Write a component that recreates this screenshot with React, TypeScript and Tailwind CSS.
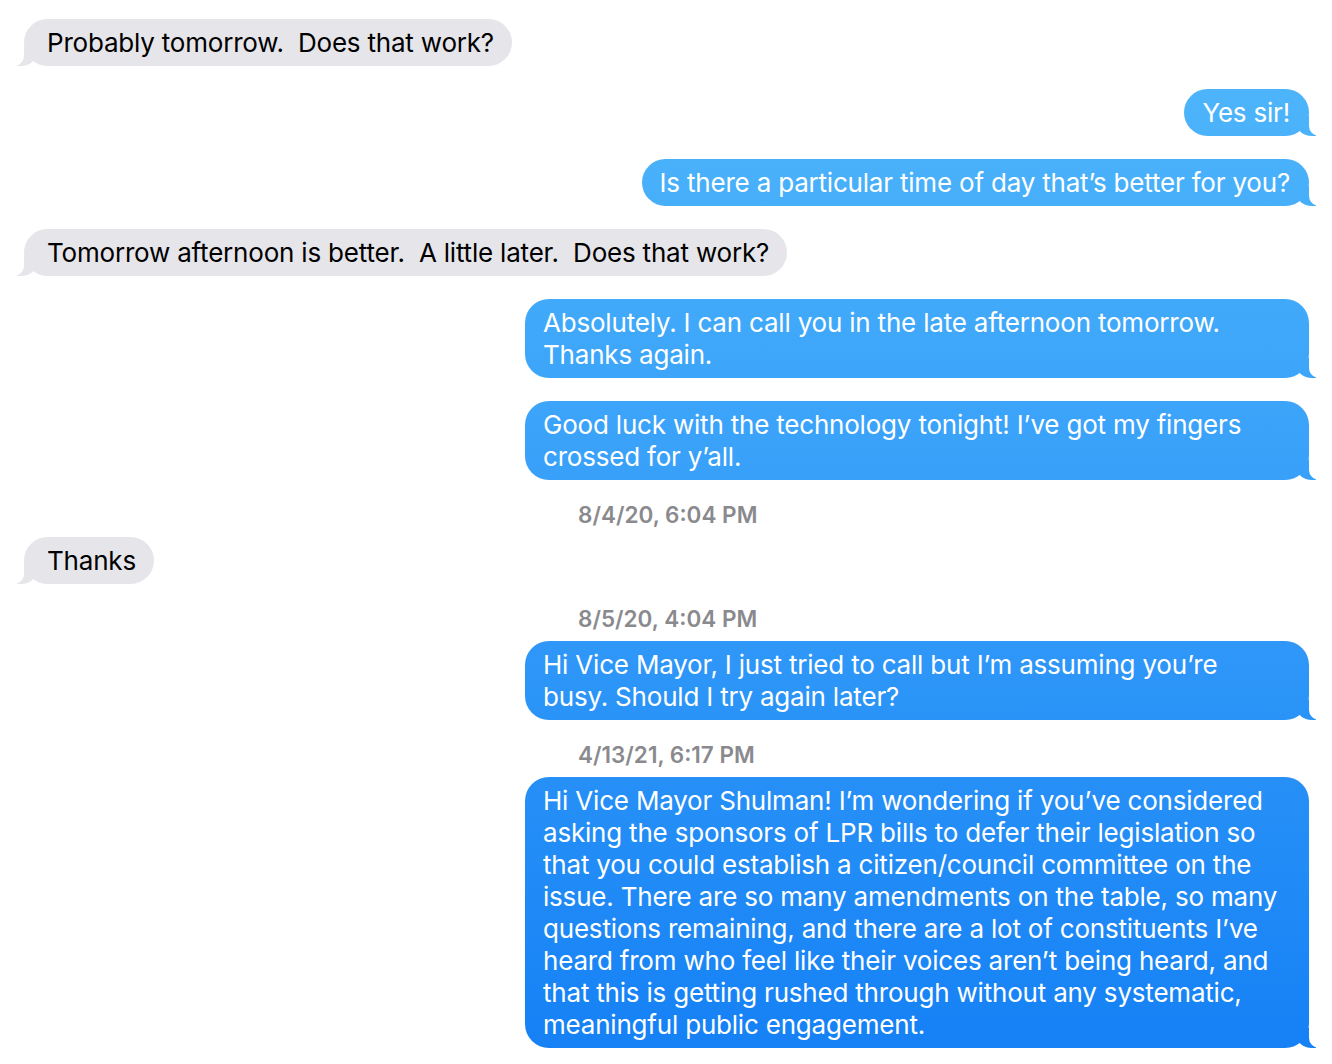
const BLUE = "bg-linear-to-b from-[#52b9fb] to-[#1480f5] bg-fixed";

type Msg = { from: "in" | "out"; lines: string[]; wide?: boolean };
type Group = { time?: string; msgs: Msg[] };

const GROUPS: Group[] = [
  {
    msgs: [
      { from: "in", lines: ["Probably tomorrow.  Does that work?"] },
      { from: "out", lines: ["Yes sir!"] },
      { from: "out", lines: ["Is there a particular time of day that\u2019s better for you?"] },
      { from: "in", lines: ["Tomorrow afternoon is better.  A little later.  Does that work?"] },
      {
        from: "out",
        wide: true,
        lines: ["Absolutely. I can call you in the late afternoon tomorrow.", "Thanks again."],
      },
      {
        from: "out",
        wide: true,
        lines: ["Good luck with the technology tonight! I\u2019ve got my fingers", "crossed for y\u2019all."],
      },
    ],
  },
  { time: "8/4/20, 6:04 PM", msgs: [{ from: "in", lines: ["Thanks"] }] },
  {
    time: "8/5/20, 4:04 PM",
    msgs: [
      {
        from: "out",
        wide: true,
        lines: ["Hi Vice Mayor, I just tried to call but I\u2019m assuming you\u2019re", "busy. Should I try again later?"],
      },
    ],
  },
  {
    time: "4/13/21, 6:17 PM",
    msgs: [
      {
        from: "out",
        wide: true,
        lines: [
          "Hi Vice Mayor Shulman! I\u2019m wondering if you\u2019ve considered",
          "asking the sponsors of LPR bills to defer their legislation so",
          "that you could establish a citizen/council committee on the",
          "issue. There are so many amendments on the table, so many",
          "questions remaining, and there are a lot of constituents I\u2019ve",
          "heard from who feel like their voices aren\u2019t being heard, and",
          "that this is getting rushed through without any systematic,",
          "meaningful public engagement.",
        ],
      },
    ],
  },
];

function Lines({ lines }: { lines: string[] }) {
  return (
    <div className="relative">
      {lines.map((l, i) => (
        <div key={i} className="whitespace-pre">
          {l}
        </div>
      ))}
    </div>
  );
}

function Incoming({ lines }: { lines: string[] }) {
  return (
    <div className="flex justify-start">
      <div className="relative rounded-[24px] bg-[#e5e5ea] pl-[23px] pr-[18px] pt-[8px] pb-[7px] text-black">
        <div className="absolute bottom-0 left-[-7px] h-[20px] w-[20px] rounded-br-[16px_14px] bg-[#e5e5ea]" />
        <div className="absolute bottom-0 left-[-10px] h-[20px] w-[10px] rounded-br-[10px] bg-white" />
        <Lines lines={lines} />
      </div>
    </div>
  );
}

function Outgoing({ lines, wide }: { lines: string[]; wide?: boolean }) {
  return (
    <div className="flex justify-end">
      <div
        className={`relative rounded-[24px] pl-[18px] pr-[19px] pt-[8px] pb-[7px] text-white ${BLUE} ${
          wide ? "w-[784px]" : ""
        }`}
      >
        <div className={`absolute bottom-0 right-[-7px] h-[20px] w-[20px] rounded-bl-[16px_14px] ${BLUE}`} />
        <div className="absolute bottom-0 right-[-10px] h-[20px] w-[10px] rounded-bl-[10px] bg-white" />
        <Lines lines={lines} />
      </div>
    </div>
  );
}

export default function App() {
  return (
    <div className="flex h-[1064px] w-[1332px] flex-col gap-[23px] overflow-hidden bg-white pl-[24px] pr-[23px] pt-[19px] font-['Inter',sans-serif] text-[26px] leading-[32px] tracking-[-0.2px]">
      {GROUPS.map((g, gi) => (
        <div key={gi} className="flex flex-col gap-[23px]">
          {g.time && (
            <div className="-mb-[13px] pl-[554px] text-[22.5px] leading-[24px] font-semibold tracking-normal text-[#8a8a8e]">
              {g.time}
            </div>
          )}
          {g.msgs.map((m, i) =>
            m.from === "in" ? (
              <Incoming key={i} lines={m.lines} />
            ) : (
              <Outgoing key={i} lines={m.lines} wide={m.wide} />
            )
          )}
        </div>
      ))}
    </div>
  );
}
